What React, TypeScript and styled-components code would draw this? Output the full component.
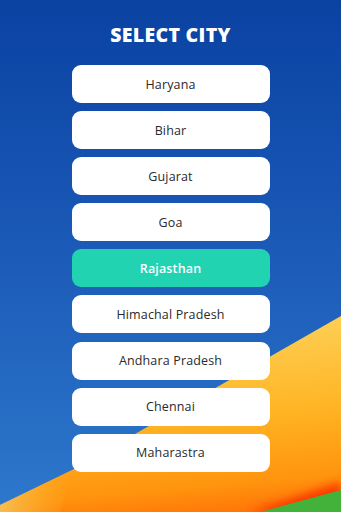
import React, { useState } from "react";
import styled, { createGlobalStyle } from "styled-components";

const GlobalStyle = createGlobalStyle`
  html, body {
    margin: 0;
    padding: 0;
  }
  body {
    font-family: "Open Sans", "Liberation Sans", sans-serif;
  }
`;

const Screen = styled.div`
  position: relative;
  width: 100%;
  min-height: 512px;
  overflow: hidden;
  background: linear-gradient(180deg, #0a42a2 0%, #1a58b6 45%, #2d78cc 100%);
`;

const Backdrop = styled.svg`
  position: absolute;
  inset: 0;
  width: 100%;
  height: 100%;
  z-index: 0;
`;

const Content = styled.div`
  position: relative;
  z-index: 1;
  display: flex;
  flex-direction: column;
  align-items: center;
  padding-top: 23px;
`;

const Title = styled.h1`
  margin: 0 0 18px;
  font-size: 19.5px;
  line-height: 24px;
  font-weight: 800;
  letter-spacing: 0.3px;
  color: #ffffff;
`;

const CityList = styled.div`
  display: flex;
  flex-direction: column;
  gap: 8.1px;
  width: 198px;
`;

const CityButton = styled.button<{ $active?: boolean }>`
  height: 38px;
  border: none;
  border-radius: 9px;
  background: ${(p) => (p.$active ? "#22d3b1" : "#ffffff")};
  color: ${(p) => (p.$active ? "#ffffff" : "#2a2a2a")};
  font-family: "Open Sans", "Liberation Sans", sans-serif;
  font-size: 12.5px;
  font-weight: ${(p) => (p.$active ? 600 : 400)};
  letter-spacing: 0.15px;
  cursor: pointer;
`;

const cities = [
  "Haryana",
  "Bihar",
  "Gujarat",
  "Goa",
  "Rajasthan",
  "Himachal Pradesh",
  "Andhara Pradesh",
  "Chennai",
  "Maharastra",
];

const App = () => {
  const [selected, setSelected] = useState("Rajasthan");

  return (
    <Screen>
      <GlobalStyle />
      <Backdrop viewBox="0 0 341 512" preserveAspectRatio="none">
        <defs>
          <linearGradient id="sun" x1="0.6" y1="0" x2="0.75" y2="1">
            <stop offset="0" stopColor="#fdd25a" />
            <stop offset="0.5" stopColor="#ffb525" />
            <stop offset="0.85" stopColor="#ff940e" />
            <stop offset="1" stopColor="#ff7408" />
          </linearGradient>
          <linearGradient id="edge" x1="0" y1="0" x2="1" y2="0">
            <stop offset="0" stopColor="#f6c25a" stopOpacity="0.9" />
            <stop offset="1" stopColor="#ffb52a" stopOpacity="0" />
          </linearGradient>
          <filter id="soft" x="-20%" y="-50%" width="140%" height="200%">
            <feGaussianBlur stdDeviation="4" />
          </filter>
        </defs>
        <polygon points="341,316 72,470 0,505 0,512 341,512" fill="url(#sun)" />
        <polygon points="72,470 0,505 0,512 60,512" fill="url(#edge)" />
        <polygon
          points="341,482 250,512 341,520"
          fill="#fb3a06"
          filter="url(#soft)"
        />
        <polygon points="341,490 260,512 341,512" fill="#42b23a" />
      </Backdrop>
      <Content>
        <Title>SELECT CITY</Title>
        <CityList>
          {cities.map((city) => (
            <CityButton
              key={city}
              $active={city === selected}
              onClick={() => setSelected(city)}
            >
              {city}
            </CityButton>
          ))}
        </CityList>
      </Content>
    </Screen>
  );
};

export default App;
